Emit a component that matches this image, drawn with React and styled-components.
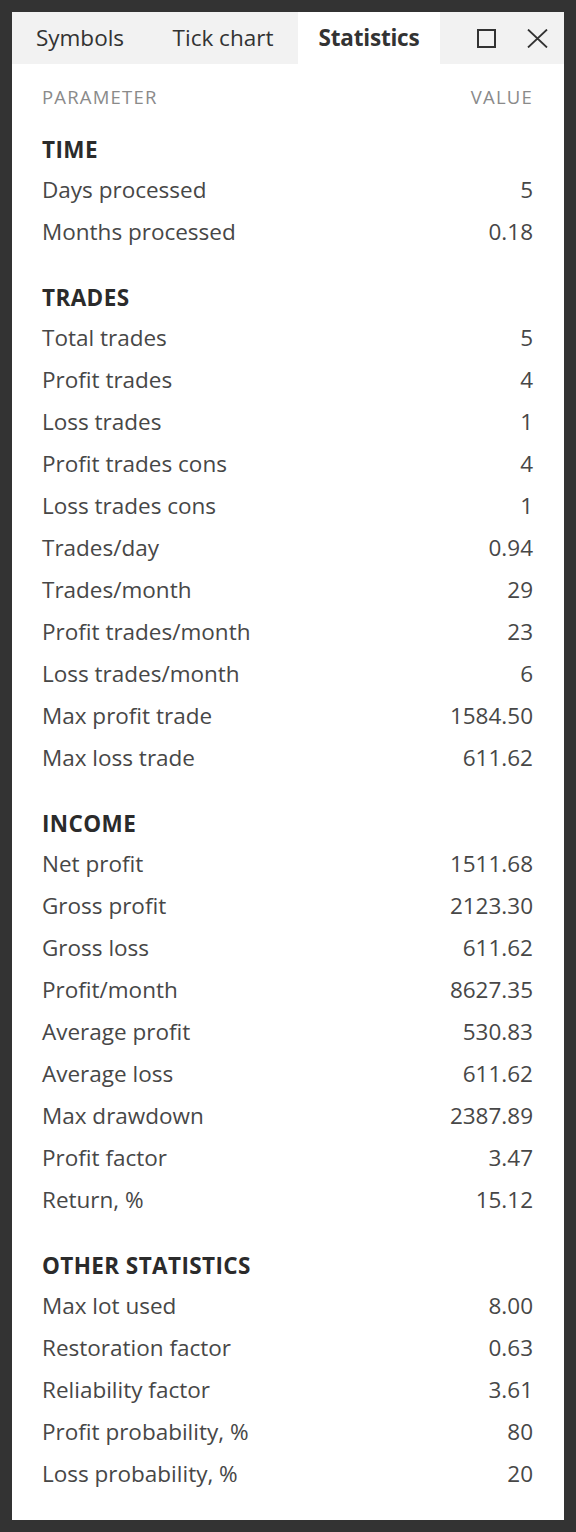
import React from "react";
import styled, { createGlobalStyle } from "styled-components";

const Global = createGlobalStyle`
  html, body { margin: 0; padding: 0; background: #333333; }
  * { box-sizing: border-box; }
`;

const Frame = styled.div`
  width: 576px;
  height: 1532px;
  padding: 12px;
  background: #333333;
  font-family: "Open Sans", "Noto Sans", sans-serif;
`;

const Panel = styled.div`
  height: 100%;
  background: #ffffff;
  display: flex;
  flex-direction: column;
`;

const TabBar = styled.div`
  height: 52px;
  background: #f2f2f2;
  display: flex;
  align-items: stretch;
`;

const Tab = styled.div`
  width: ${(p) => p.$w}px;
  display: flex;
  align-items: center;
  justify-content: center;
  font-size: 22.5px;
  color: #333333;
  font-weight: ${(p) => (p.$active ? 700 : 400)};
  background: ${(p) => (p.$active ? "#ffffff" : "transparent")};
  letter-spacing: ${(p) => (p.$active ? "-0.2px" : "0px")};
  padding-bottom: 1px;
`;

const Controls = styled.div`
  flex: 1;
  display: flex;
  align-items: center;
  justify-content: flex-end;
  gap: 31px;
  padding-right: 16px;
`;

const IconBtn = styled.div`
  display: flex;
  align-items: center;
  justify-content: center;
  height: 19px;
  color: #333333;
`;

const Body = styled.div`
  padding: 0 31px 0 30px;
`;

const ColumnHeader = styled.div`
  height: 66px;
  display: flex;
  align-items: center;
  justify-content: space-between;
  font-size: 18.5px;
  letter-spacing: 1.2px;
  color: #8a8a8a;
  text-transform: uppercase;
  padding-bottom: 2px;
`;

const SectionTitle = styled.div`
  height: 40px;
  margin-top: ${(p) => (p.$first ? 0 : 24)}px;
  display: flex;
  align-items: center;
  font-size: 22.5px;
  font-weight: 700;
  color: #2b2b2b;
  letter-spacing: 0.4px;
  padding-bottom: 1px;
`;

const Row = styled.div`
  height: 42px;
  display: flex;
  align-items: center;
  justify-content: space-between;
  font-size: 22.5px;
  color: #474747;
  padding-bottom: 3px;
`;

const sections = [
  {
    title: "TIME",
    rows: [
      ["Days processed", "5"],
      ["Months processed", "0.18"],
    ],
  },
  {
    title: "TRADES",
    rows: [
      ["Total trades", "5"],
      ["Profit trades", "4"],
      ["Loss trades", "1"],
      ["Profit trades cons", "4"],
      ["Loss trades cons", "1"],
      ["Trades/day", "0.94"],
      ["Trades/month", "29"],
      ["Profit trades/month", "23"],
      ["Loss trades/month", "6"],
      ["Max profit trade", "1584.50"],
      ["Max loss trade", "611.62"],
    ],
  },
  {
    title: "INCOME",
    rows: [
      ["Net profit", "1511.68"],
      ["Gross profit", "2123.30"],
      ["Gross loss", "611.62"],
      ["Profit/month", "8627.35"],
      ["Average profit", "530.83"],
      ["Average loss", "611.62"],
      ["Max drawdown", "2387.89"],
      ["Profit factor", "3.47"],
      ["Return, %", "15.12"],
    ],
  },
  {
    title: "OTHER STATISTICS",
    rows: [
      ["Max lot used", "8.00"],
      ["Restoration factor", "0.63"],
      ["Reliability factor", "3.61"],
      ["Profit probability, %", "80"],
      ["Loss probability, %", "20"],
    ],
  },
];

export default function App() {
  return (
    <Frame>
      <Global />
      <Panel>
        <TabBar>
          <Tab $w={136}>Symbols</Tab>
          <Tab $w={150}>Tick chart</Tab>
          <Tab $w={142} $active>
            Statistics
          </Tab>
          <Controls>
            <IconBtn>
              <svg width="19" height="19" viewBox="0 0 19 19">
                <rect x="1" y="1" width="17" height="17" fill="none" stroke="currentColor" strokeWidth="2" />
              </svg>
            </IconBtn>
            <IconBtn>
              <svg width="21" height="19" viewBox="0 0 21 19">
                <path d="M1 0.5 L20 18.5 M20 0.5 L1 18.5" fill="none" stroke="currentColor" strokeWidth="1.8" />
              </svg>
            </IconBtn>
          </Controls>
        </TabBar>
        <Body>
          <ColumnHeader>
            <span>Parameter</span>
            <span>Value</span>
          </ColumnHeader>
          {sections.map((s, i) => (
            <section key={s.title}>
              <SectionTitle $first={i === 0}>{s.title}</SectionTitle>
              {s.rows.map(([k, v]) => (
                <Row key={k}>
                  <span>{k}</span>
                  <span>{v}</span>
                </Row>
              ))}
            </section>
          ))}
        </Body>
      </Panel>
    </Frame>
  );
}
